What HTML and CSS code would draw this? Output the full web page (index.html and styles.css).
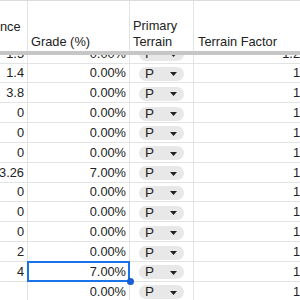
FILE: index.html
```html
<!DOCTYPE html>
<html>
<head>
<meta charset="utf-8">
<link rel="stylesheet" href="styles.css">
</head>
<body>
<div class="sheet">
  <div class="head cols">
    <div class="hcell">nce</div>
    <div class="hcell">Grade (%)</div>
    <div class="hcell">Primary<br>Terrain</div>
    <div class="hcell">Terrain Factor</div>
  </div>
  <div class="freeze"></div>
  <div class="body">
    <div class="rows">
      <div class="row cols"><div class="cell num">1.5</div><div class="cell num">0.00%</div><div class="cell"><span class="chip">P<svg class="arrow" width="7" height="4" viewBox="0 0 7 4"><polygon points="0,0 7,0 3.5,4"/></svg></span></div><div class="cell num">1.2</div></div>
      <div class="row cols"><div class="cell num">1.4</div><div class="cell num">0.00%</div><div class="cell"><span class="chip">P<svg class="arrow" width="7" height="4" viewBox="0 0 7 4"><polygon points="0,0 7,0 3.5,4"/></svg></span></div><div class="cell num">1</div></div>
      <div class="row cols"><div class="cell num">3.8</div><div class="cell num">0.00%</div><div class="cell"><span class="chip">P<svg class="arrow" width="7" height="4" viewBox="0 0 7 4"><polygon points="0,0 7,0 3.5,4"/></svg></span></div><div class="cell num">1</div></div>
      <div class="row cols"><div class="cell num">0</div><div class="cell num">0.00%</div><div class="cell"><span class="chip">P<svg class="arrow" width="7" height="4" viewBox="0 0 7 4"><polygon points="0,0 7,0 3.5,4"/></svg></span></div><div class="cell num">1</div></div>
      <div class="row cols"><div class="cell num">0</div><div class="cell num">0.00%</div><div class="cell"><span class="chip">P<svg class="arrow" width="7" height="4" viewBox="0 0 7 4"><polygon points="0,0 7,0 3.5,4"/></svg></span></div><div class="cell num">1</div></div>
      <div class="row cols"><div class="cell num">0</div><div class="cell num">0.00%</div><div class="cell"><span class="chip">P<svg class="arrow" width="7" height="4" viewBox="0 0 7 4"><polygon points="0,0 7,0 3.5,4"/></svg></span></div><div class="cell num">1</div></div>
      <div class="row cols"><div class="cell num">3.26</div><div class="cell num">7.00%</div><div class="cell"><span class="chip">P<svg class="arrow" width="7" height="4" viewBox="0 0 7 4"><polygon points="0,0 7,0 3.5,4"/></svg></span></div><div class="cell num">1</div></div>
      <div class="row cols"><div class="cell num">0</div><div class="cell num">0.00%</div><div class="cell"><span class="chip">P<svg class="arrow" width="7" height="4" viewBox="0 0 7 4"><polygon points="0,0 7,0 3.5,4"/></svg></span></div><div class="cell num">1</div></div>
      <div class="row cols"><div class="cell num">0</div><div class="cell num">0.00%</div><div class="cell"><span class="chip">P<svg class="arrow" width="7" height="4" viewBox="0 0 7 4"><polygon points="0,0 7,0 3.5,4"/></svg></span></div><div class="cell num">1</div></div>
      <div class="row cols"><div class="cell num">0</div><div class="cell num">0.00%</div><div class="cell"><span class="chip">P<svg class="arrow" width="7" height="4" viewBox="0 0 7 4"><polygon points="0,0 7,0 3.5,4"/></svg></span></div><div class="cell num">1</div></div>
      <div class="row cols"><div class="cell num">2</div><div class="cell num">0.00%</div><div class="cell"><span class="chip">P<svg class="arrow" width="7" height="4" viewBox="0 0 7 4"><polygon points="0,0 7,0 3.5,4"/></svg></span></div><div class="cell num">1</div></div>
      <div class="row cols"><div class="cell num">4</div><div class="cell num selected">7.00%<span class="handle"></span></div><div class="cell"><span class="chip">P<svg class="arrow" width="7" height="4" viewBox="0 0 7 4"><polygon points="0,0 7,0 3.5,4"/></svg></span></div><div class="cell num">1</div></div>
      <div class="row cols"><div class="cell num"></div><div class="cell num">0.00%</div><div class="cell"><span class="chip">P<svg class="arrow" width="7" height="4" viewBox="0 0 7 4"><polygon points="0,0 7,0 3.5,4"/></svg></span></div><div class="cell num">1</div></div>
    </div>
  </div>
</div>
</body>
</html>
```

FILE: styles.css
```css
html, body {
  margin: 0;
  padding: 0;
  overflow: hidden;
  background: #ffffff;
}

body {
  width: 300px;
  height: 300px;
  font-family: "Liberation Sans", Arial, sans-serif;
  font-size: 12.8px;
  color: #222222;
}

.sheet {
  width: 304px;
}

.cols {
  display: grid;
  grid-template-columns: 28px 102px 64px 110px;
}

.head {
  height: 51px;
  border-top: 1px solid #dadce0;
  box-sizing: border-box;
}

.hcell {
  border-right: 1px solid #e2e3e3;
  display: flex;
  flex-direction: column;
  justify-content: flex-end;
  padding: 0 3px 1px 3px;
  line-height: 16px;
  white-space: nowrap;
  overflow: hidden;
}

.hcell:first-child {
  justify-content: flex-start;
  padding: 18px 0 0 0;
}

.hcell:last-child {
  padding-left: 4px;
}

.freeze {
  height: 4px;
  background: #c6c6c6;
}

.body {
  height: 245px;
  overflow: hidden;
}

.rows {
  margin-top: -11.35px;
}

.row {
  height: 19.85px;
  box-sizing: border-box;
  border-bottom: 1px solid #e2e3e3;
}

.cell {
  border-right: 1px solid #e2e3e3;
  display: flex;
  align-items: center;
  white-space: nowrap;
  min-width: 0;
}

.num {
  justify-content: flex-end;
  padding-right: 3px;
}

.chip {
  display: flex;
  align-items: center;
  justify-content: space-between;
  box-sizing: border-box;
  width: 45px;
  height: 14px;
  margin: 2px 0 0 8.5px;
  padding: 0 6.5px 0 6.5px;
  border-radius: 7px;
  background: #e8e8e8;
  font-size: 13.5px;
  line-height: 14px;
}

.arrow {
  fill: #222222;
  margin-top: 1px;
}

.selected {
  position: relative;
}

.selected::after {
  content: "";
  position: absolute;
  left: -1px;
  top: -1px;
  right: -1px;
  bottom: -1px;
  border: 2px solid #1a73e8;
  pointer-events: none;
}

.handle {
  position: absolute;
  right: -4.5px;
  bottom: -4.5px;
  width: 7px;
  height: 7px;
  border-radius: 50%;
  background: #1a5fd6;
  z-index: 1;
}
```
